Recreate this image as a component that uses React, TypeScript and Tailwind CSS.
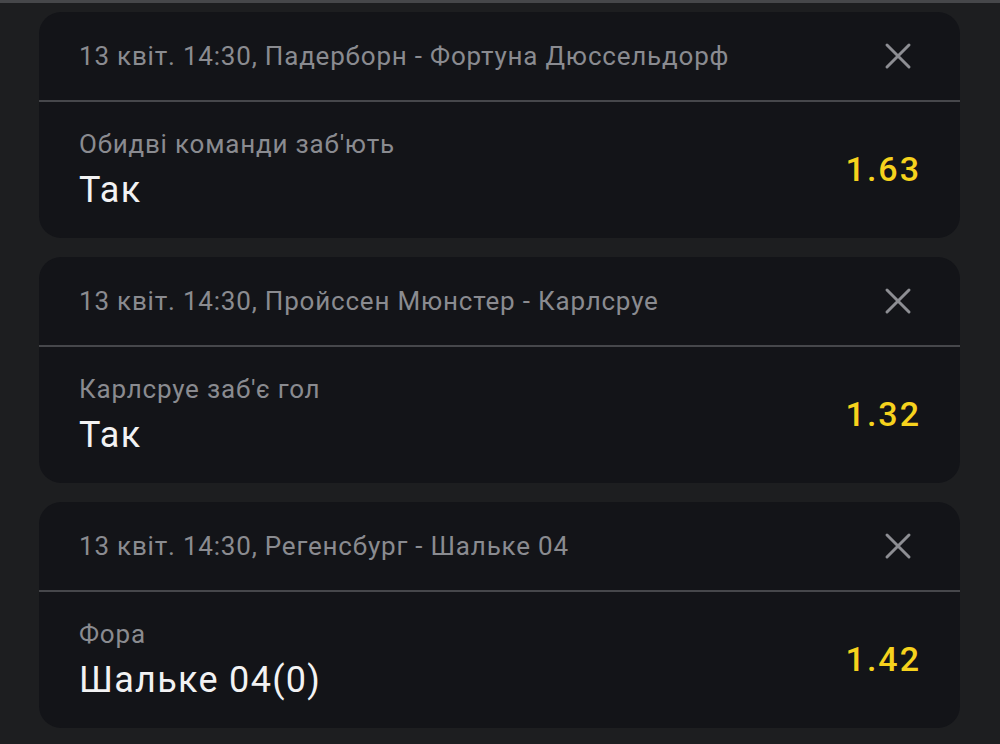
const bets = [
  {
    match: "13 квіт. 14:30, Падерборн - Фортуна Дюссельдорф",
    market: "Обидві команди заб'ють",
    pick: "Так",
    odds: "1.63",
  },
  {
    match: "13 квіт. 14:30, Пройссен Мюнстер - Карлсруе",
    market: "Карлсруе заб'є гол",
    pick: "Так",
    odds: "1.32",
  },
  {
    match: "13 квіт. 14:30, Регенсбург - Шальке 04",
    market: "Фора",
    pick: "Шальке 04(0)",
    odds: "1.42",
  },
];

const CloseIcon = () => (
  <svg width="28" height="28" viewBox="0 0 28 28" fill="none">
    <path d="M3 3L25 25M25 3L3 25" stroke="#8d8e93" strokeWidth="3" strokeLinecap="round" />
  </svg>
);

const BetCard = ({ match, market, pick, odds }: (typeof bets)[number]) => {
  return (
    <div className="bg-[#131418] rounded-[22px] overflow-hidden">
      <div className="flex flex-row items-center justify-between h-[88px] pl-10 pr-[48px]">
        <span className="text-[26px] tracking-[0.8px] text-[#8a8b90] leading-none">{match}</span>
        <CloseIcon />
      </div>
      <div className="h-[2px] bg-[#46474b]" />
      <div className="flex flex-row items-center justify-between h-[136px] pl-10 pr-[39px]">
        <div className="flex flex-col">
          <span className="text-[26px] tracking-[0.8px] leading-[30px] text-[#8a8b90]">{market}</span>
          <span className="text-[36px] tracking-[1.3px] leading-[44px] mt-[9px] text-[#f2f2f3]">{pick}</span>
        </div>
        <span className="text-[34px] tracking-[2px] font-medium text-[#f6d21d] leading-none -mt-[2px]">{odds}</span>
      </div>
    </div>
  );
};

export default function App() {
  return (
    <div className="w-[1000px] h-[744px] bg-[#1d1e20] overflow-hidden font-['Roboto',sans-serif]">
      <div className="h-[3px] bg-[#46474a]" />
      <div className="flex flex-col gap-[19px] pt-[9px] pl-[39px] pr-[40px]">
        {bets.map((b) => (
          <BetCard key={b.match} {...b} />
        ))}
      </div>
    </div>
  );
}
